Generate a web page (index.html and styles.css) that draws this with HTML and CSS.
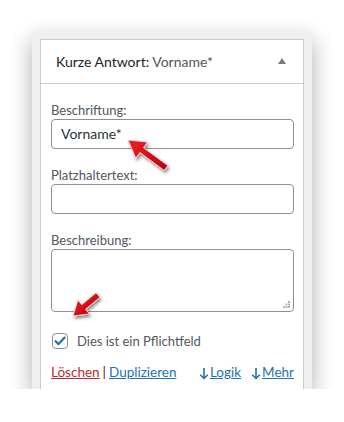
FILE: index.html
```html
<!DOCTYPE html>
<html lang="de">
<head>
  <meta charset="UTF-8">
  <meta name="viewport" content="width=device-width, initial-scale=1.0">
  <title>Kurze Antwort</title>
  <link rel="stylesheet" href="styles.css">
</head>
<body>

  <!-- Field settings panel -->
  <div class="frame">
    <div class="panel">
      <div class="panel-head">
        <span class="head-title"><b>Kurze Antwort:</b> Vorname*</span>
        <span class="toggle"></span>
      </div>

      <div class="panel-body">
        <div class="field">
          <label class="field-label">Beschriftung:</label>
          <div class="input">Vorname*</div>
        </div>

        <div class="field">
          <label class="field-label">Platzhaltertext:</label>
          <div class="input"></div>
        </div>

        <div class="field">
          <label class="field-label">Beschreibung:</label>
          <div class="input textarea">
            <svg class="grip" width="7" height="7" viewBox="0 0 7 7">
              <rect x="5" y="0" width="2" height="2" fill="#b4b8bc"/>
              <rect x="2.5" y="2.5" width="2" height="2" fill="#b4b8bc"/>
              <rect x="5" y="2.5" width="2" height="2" fill="#b4b8bc"/>
              <rect x="0" y="5" width="2" height="2" fill="#b4b8bc"/>
              <rect x="2.5" y="5" width="2" height="2" fill="#b4b8bc"/>
              <rect x="5" y="5" width="2" height="2" fill="#b4b8bc"/>
            </svg>
          </div>
        </div>

        <div class="check-row">
          <span class="checkbox">
            <svg width="14" height="14" viewBox="0 0 14 14">
              <path d="M2.6 7.2 L5.6 10.1 L11.6 3.6" fill="none" stroke="#2271b1" stroke-width="2.2" stroke-linecap="round" stroke-linejoin="round"/>
            </svg>
          </span>
          <span>Dies ist ein Pflichtfeld</span>
        </div>

        <div class="actions">
          <div class="actions-left">
            <a class="delete">Löschen</a><span class="sep">|</span><a>Duplizieren</a>
          </div>
          <div class="actions-right">
            <span class="more">
              <svg class="down" width="10" height="13" viewBox="0 0 10 13">
                <path d="M5 1 V11.5 M1.2 7.8 L5 11.5 L8.8 7.8" fill="none" stroke="#2271b1" stroke-width="1.6"/>
              </svg><a>Logik</a>
            </span>
            <span class="more">
              <svg class="down" width="10" height="13" viewBox="0 0 10 13">
                <path d="M5 1 V11.5 M1.2 7.8 L5 11.5 L8.8 7.8" fill="none" stroke="#2271b1" stroke-width="1.6"/>
              </svg><a>Mehr</a>
            </span>
          </div>
        </div>
      </div>
    </div>
  </div>

  <!-- Red annotation arrows -->
  <svg class="arrows" width="344" height="422" viewBox="0 0 344 422">
    <defs>
      <filter id="shade" x="-50%" y="-50%" width="200%" height="200%">
        <feDropShadow dx="1.5" dy="2.5" stdDeviation="1.8" flood-color="#000" flood-opacity="0.45"/>
      </filter>
      <linearGradient id="red" x1="0" y1="0" x2="1" y2="1">
        <stop offset="0" stop-color="#f02228"/>
        <stop offset="1" stop-color="#b8000a"/>
      </linearGradient>
    </defs>
    <polygon filter="url(#shade)" fill="url(#red)" stroke="#fbe3e3" stroke-width="0.8" stroke-linejoin="round"
      points="128,140 147.6,142.1 143.5,147.7 167.8,165.6 164.2,170.4 139.9,152.5 135.8,158.2"/>
    <polygon filter="url(#shade)" fill="url(#red)" stroke="#fbe3e3" stroke-width="0.8" stroke-linejoin="round"
      points="73,316 77.9,300.1 81.8,304.7 96.1,292.7 99.9,297.3 85.6,309.3 89.5,313.9"/>
  </svg>

</body>
</html>
```

FILE: styles.css
```css
/* Reset */
body, html {
  margin: 0;
  padding: 0;
  background: #fff;
  font-family: Lato, "Noto Sans", sans-serif;
  font-size: 13px;
  color: #50575e;
}

/* Gray frame around the panel */
.frame {
  position: relative;
  margin: 32px 0 0 32px;
  width: 264px;
  padding: 7px 8px 0 8px;
  background: #f0f0f1;
  box-shadow: 0 8px 22px rgba(0, 0, 0, 0.32);
}

.panel {
  background: #fff;
  border: 1px solid #c9cbce;
  border-bottom: none;
}

.panel-head {
  height: 43px;
  display: flex;
  align-items: center;
  justify-content: space-between;
  padding: 0 17px 0 15px;
  border-bottom: 1px solid #c9cbce;
  font-size: 14px;
}

.head-title {
  color: #50575e;
}

.head-title b {
  font-weight: normal;
  color: #1d2327;
}

/* little collapse triangle */
.toggle {
  width: 0;
  height: 0;
  border-left: 4px solid transparent;
  border-right: 4px solid transparent;
  border-bottom: 6px solid #787c82;
  margin-top: -2px;
}

.panel-body {
  padding: 17px 9px 7px 10px;
}

.field {
  margin-bottom: 17px;
}

.field-label {
  display: block;
  line-height: 18px;
}

.input {
  position: relative;
  box-sizing: border-box;
  height: 30px;
  border: 1px solid #8c8f94;
  border-radius: 4px;
  padding: 0 9px;
  line-height: 28px;
  font-size: 14px;
  color: #2c3338;
}

.textarea {
  height: 63px;
}

.grip {
  position: absolute;
  right: 3px;
  bottom: 3px;
}

.check-row {
  display: flex;
  align-items: center;
  gap: 9px;
  height: 20px;
  margin-top: 19px;
  padding-left: 1px;
  font-size: 13px;
}

.checkbox {
  box-sizing: border-box;
  width: 16px;
  height: 16px;
  border: 1px solid #8c8f94;
  border-radius: 4px;
  display: flex;
  align-items: center;
  justify-content: center;
}

.actions {
  display: flex;
  justify-content: space-between;
  align-items: center;
  height: 20px;
  margin-top: 11px;
  font-size: 13.5px;
}

.actions a {
  color: #2271b1;
  text-decoration: underline;
}

.actions a.delete {
  color: #b32d2e;
}

.sep {
  color: #1d2327;
  margin: 0 3px;
}

.actions-right {
  display: flex;
  gap: 10px;
}

.more {
  display: flex;
  align-items: center;
  gap: 1px;
}

.down {
  margin-top: 2px;
}

/* annotation layer */
.arrows {
  position: absolute;
  top: 0;
  left: 0;
  pointer-events: none;
}
```
